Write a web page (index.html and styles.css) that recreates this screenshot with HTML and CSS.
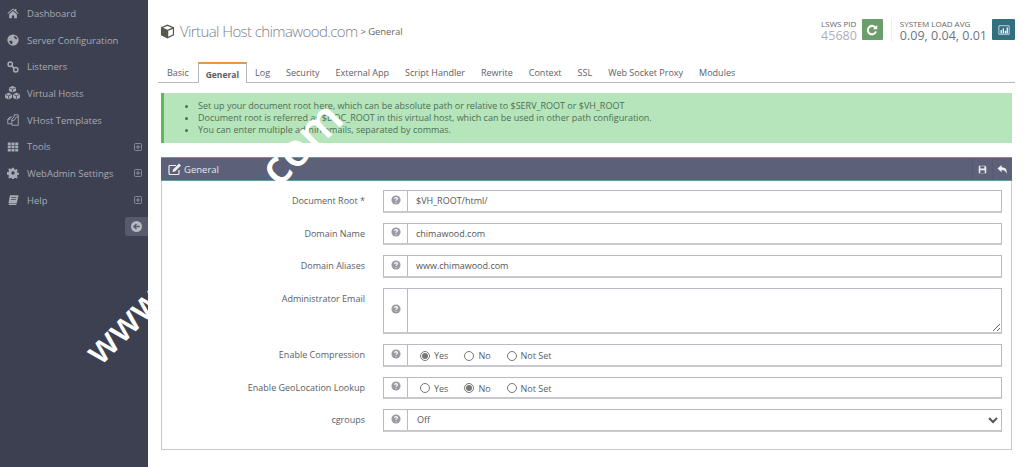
FILE: index.html
```html
<!DOCTYPE html>
<html lang="en">
<head>
<meta charset="utf-8">
<title>Virtual Host chimawood.com</title>
<link rel="stylesheet" href="styles.css">
</head>
<body>
<aside class="sidebar">
  <nav class="nav">
    <a class="nav-item"><svg class="nav-icon" viewBox="0 0 16 16"><path d="M8 2 .5 8.400l.9 1L8 3.800l6.600 5.600.9-1L12.500 5.800V2.500h-2V4.100z"/><path d="M2.800 9.800 8 5.300l5.200 4.500V15H9.500v-3.800h-3V15H2.800z"/></svg><span>Dashboard</span></a>
    <a class="nav-item"><svg class="nav-icon" viewBox="0 0 16 16"><circle cx="8" cy="8" r="7.500"/><path class="cut" d="M10 2.500c1.800.6 3.300 2.200 3.700 4l-2.200.5-1-1.600-1.500-.5zM2.800 9.500l3-.7 1.700 1.700-.7 3.200C4.800 13 3.300 11.500 2.800 9.500z"/></svg><span>Server Configuration</span></a>
    <a class="nav-item"><svg class="nav-icon" viewBox="0 0 16 16"><g class="line"><circle cx="4.300" cy="4.300" r="2.900"/><circle cx="11.700" cy="11.700" r="2.900"/><path d="m6.500 6.500 3 3"/></g></svg><span>Listeners</span></a>
    <a class="nav-item"><svg class="nav-icon wide" viewBox="0 0 18 15"><path d="M9 0l3.800 1.600v3.800L9 7 5.200 5.400V1.600zM4.800 7.200l3.700 1.600v3.800L4.800 14.400 1 12.600V8.800zM13.200 7.200 17 8.800v3.800l-3.800 1.800-3.700-1.800V8.800z"/><path class="cut-stroke" d="M5.500 2 9 3.400 12.500 2M9 3.400V7M1.400 9l3.400 1.500L8 9M4.800 10.500V14M10 9l3.200 1.500L16.600 9M13.200 10.500V14"/></svg><span>Virtual Hosts</span></a>
    <a class="nav-item"><svg class="nav-icon" viewBox="0 0 16 16"><g class="line thin"><path d="M7 4H4L1 7v6h5"/><path d="M4 4v3H1"/><path d="M6.500 9V7l3-3V1h5.500v3"/><path d="M6.500 8.500h3l3-4.500H15v11H6.500z"/></g></svg><span>VHost Templates</span></a>
    <a class="nav-item"><svg class="nav-icon" viewBox="0 0 16 16"><path d="M1 2h4v3.500H1zM6 2h4v3.500H6zM11 2h4v3.500h-4zM1 6.300h4v3.500H1zM6 6.300h4v3.500H6zM11 6.300h4v3.500h-4zM1 10.600h4v3.500H1zM6 10.600h4v3.500H6zM11 10.600h4v3.500h-4z"/></svg><span>Tools</span><svg class="expand" viewBox="0 0 9 9"><rect x=".5" y=".5" width="8" height="8" rx="1.500"/><path d="M2 4.500h5M4.500 2v5"/></svg></a>
    <a class="nav-item"><svg class="nav-icon" viewBox="0 0 16 16"><path d="M6.800 1h2.400l.3 2 1.500.7 1.700-1.100 1.700 1.700-1.100 1.700.6 1.500 2 .3v2.400l-2 .3-.6 1.500 1.100 1.700-1.700 1.700-1.700-1.100-1.500.6-.3 2H6.800l-.3-2-1.500-.6-1.700 1.100-1.700-1.700 1.100-1.700-.7-1.500-2-.3V6.800l2-.3.700-1.500-1.100-1.700 1.700-1.700L5 2.700l1.500-.7z"/><circle class="cut" cx="8" cy="8" r="2.200"/></svg><span>WebAdmin Settings</span><svg class="expand" viewBox="0 0 9 9"><rect x=".5" y=".5" width="8" height="8" rx="1.500"/><path d="M2 4.500h5M4.500 2v5"/></svg></a>
    <a class="nav-item"><svg class="nav-icon" viewBox="0 0 16 16"><path d="M4 1.500h11.500l-2.500 10.500H2z"/><path d="M2 12.800h10.800l-.4 1.700H2.500z"/><path class="cut" d="M6 4h6.500l-.2 1H5.800zM5.400 6.500h6.500l-.2 1H5.200z"/></svg><span>Help</span><svg class="expand" viewBox="0 0 9 9"><rect x=".5" y=".5" width="8" height="8" rx="1.500"/><path d="M2 4.500h5M4.500 2v5"/></svg></a>
  </nav>
  <div class="collapse"><svg viewBox="0 0 12 12"><circle cx="6" cy="6" r="6"/><path class="cut-line" d="M9.500 6H3.500M6 3.200 3.200 6 6 8.800"/></svg></div>
</aside>

<main class="main">
  <header class="top">
    <h1 class="title">
      <svg class="cube" viewBox="0 0 16 16"><path d="M8 .5 15 3.500v8.500L8 15.500 1 12V3.500z" fill="#59564b"/><path d="M8 2 12.800 4 8 6 3.200 4z" fill="#fff"/><path d="M8.800 7.300 13.700 5.200v6L8.800 13.700z" fill="#fff"/></svg>
      <span>Virtual Host chimawood.com</span><small>&gt; General</small>
    </h1>
    <div class="stats">
      <div class="stat"><div class="stat-text"><div class="stat-label">LSWS PID</div><div class="stat-value pid">45680</div></div>
        <div class="stat-btn green"><svg viewBox="0 0 12 12"><path class="btn-line" d="M9.800 4.200A4.200 4.200 0 1 0 10 7.500"/><path class="btn-fill" d="M7 5.300h4.300V1z"/></svg></div></div>
      <div class="stat sys"><div class="stat-text"><div class="stat-label">SYSTEM LOAD AVG</div><div class="stat-value">0.09, 0.04, 0.01</div></div>
        <div class="stat-btn teal"><svg viewBox="0 0 14 12"><path class="btn-frame" d="M1 1h12v10H1z"/><path class="btn-bars" d="M3 6h1.500v4H3zM5.500 4h1.500v6H5.500zM8 7h1.500v3H8zM10 3h1.500v7H10z"/></svg></div></div>
    </div>
  </header>

  <div class="tabs">
    <a class="tab">Basic</a><a class="tab active">General</a><a class="tab">Log</a><a class="tab">Security</a><a class="tab">External App</a><a class="tab">Script Handler</a><a class="tab">Rewrite</a><a class="tab">Context</a><a class="tab">SSL</a><a class="tab">Web Socket Proxy</a><a class="tab">Modules</a>
  </div>

  <div class="alert">
    <ul>
      <li>Set up your document root here, which can be absolute path or relative to $SERV_ROOT or $VH_ROOT</li>
      <li>Document root is referred as $DOC_ROOT in this virtual host, which can be used in other path configuration.</li>
      <li>You can enter multiple admin emails, separated by commas.</li>
    </ul>
  </div>

  <section class="panel">
    <div class="panel-head">
      <svg class="edit" viewBox="0 0 14 14"><path class="edit-box" d="M11 8v3.500a1 1 0 0 1-1 1H2a1 1 0 0 1-1-1v-7a1 1 0 0 1 1-1h6"/><path class="edit-pen" d="M5 7.500 11 1.500l2 2-6 6-2.500.5z"/></svg>
      <span class="panel-title">General</span>
      <div class="panel-actions">
        <span class="action"><svg viewBox="0 0 12 12"><path class="act" d="M1 1h8.500L11 2.500V11H1z"/><path class="act-cut" d="M3 1.500h5.500v3H3zM3 7h6v3.500H3z"/></svg></span>
        <span class="action"><svg class="back" viewBox="0 0 12 12"><path class="act" d="M5 1 .5 5 5 9V6.500c3 0 4.500 1 5.500 4 .8-4-1-7-5.500-7z"/></svg></span>
      </div>
    </div>
    <form class="form">
      <div class="row"><label class="label">Document Root *</label><div class="field"><span class="hint"><svg viewBox="0 0 12 12"><circle cx="6" cy="6" r="5.500"/><path class="q" d="M4.500 4.700c0-2 3.200-2 3.200-.1 0 1.200-1.700 1.300-1.700 2.400"/><circle class="qd" cx="6" cy="8.700" r=".7"/></svg></span><input class="control" type="text" value="$VH_ROOT/html/"></div></div>
      <div class="row"><label class="label">Domain Name</label><div class="field"><span class="hint"><svg viewBox="0 0 12 12"><circle cx="6" cy="6" r="5.500"/><path class="q" d="M4.500 4.700c0-2 3.200-2 3.200-.1 0 1.200-1.700 1.300-1.700 2.400"/><circle class="qd" cx="6" cy="8.700" r=".7"/></svg></span><input class="control" type="text" value="chimawood.com"></div></div>
      <div class="row"><label class="label">Domain Aliases</label><div class="field"><span class="hint"><svg viewBox="0 0 12 12"><circle cx="6" cy="6" r="5.500"/><path class="q" d="M4.500 4.700c0-2 3.200-2 3.200-.1 0 1.200-1.700 1.300-1.700 2.400"/><circle class="qd" cx="6" cy="8.700" r=".7"/></svg></span><input class="control" type="text" value="www.chimawood.com"></div></div>
      <div class="row tall"><label class="label">Administrator Email</label><div class="field"><span class="hint"><svg viewBox="0 0 12 12"><circle cx="6" cy="6" r="5.500"/><path class="q" d="M4.500 4.700c0-2 3.200-2 3.200-.1 0 1.200-1.700 1.300-1.700 2.400"/><circle class="qd" cx="6" cy="8.700" r=".7"/></svg></span><textarea class="control area"></textarea></div></div>
      <div class="row"><label class="label">Enable Compression</label><div class="field"><span class="hint"><svg viewBox="0 0 12 12"><circle cx="6" cy="6" r="5.500"/><path class="q" d="M4.500 4.700c0-2 3.200-2 3.200-.1 0 1.200-1.700 1.300-1.700 2.400"/><circle class="qd" cx="6" cy="8.700" r=".7"/></svg></span><div class="radios"><label class="radio"><input type="radio" name="c" checked>Yes</label><label class="radio"><input type="radio" name="c">No</label><label class="radio"><input type="radio" name="c">Not Set</label></div></div></div>
      <div class="row"><label class="label">Enable GeoLocation Lookup</label><div class="field"><span class="hint"><svg viewBox="0 0 12 12"><circle cx="6" cy="6" r="5.500"/><path class="q" d="M4.500 4.700c0-2 3.200-2 3.200-.1 0 1.200-1.700 1.300-1.700 2.400"/><circle class="qd" cx="6" cy="8.700" r=".7"/></svg></span><div class="radios"><label class="radio"><input type="radio" name="g">Yes</label><label class="radio"><input type="radio" name="g" checked>No</label><label class="radio"><input type="radio" name="g">Not Set</label></div></div></div>
      <div class="row"><label class="label">cgroups</label><div class="field"><span class="hint"><svg viewBox="0 0 12 12"><circle cx="6" cy="6" r="5.500"/><path class="q" d="M4.500 4.700c0-2 3.200-2 3.200-.1 0 1.200-1.700 1.300-1.700 2.400"/><circle class="qd" cx="6" cy="8.700" r=".7"/></svg></span><select class="control"><option>Off</option></select></div></div>
    </form>
  </section>
</main>

<div class="watermark"><span class="wm-start">www</span><span class="wm-end">com</span></div>
</body>
</html>
```
FILE: styles.css
```css
* { box-sizing: border-box; }
html, body { height: 100%; }
body {
  margin: 0;
  display: flex;
  overflow: hidden;
  background: #fff;
  color: #555;
  font-family: "Open Sans", "Noto Sans", sans-serif;
  font-size: 9px;
}

/* Sidebar */
.sidebar { flex: 0 0 148px; background: #3d4051; display: flex; flex-direction: column; }
.nav { display: flex; flex-direction: column; }
.nav-item { display: flex; align-items: center; height: 26.700px; padding: 0 6px 0 7px; color: #a7aab3; font-size: 9.500px; }
.nav-icon { width: 12px; height: 12px; margin-right: 8px; fill: #a7aab3; flex: none; }
.nav-icon.wide { width: 17px; height: 14px; margin-left: -3px; margin-right: 6px; }
.nav-icon .cut { fill: #3d4051; }
.nav-icon .cut-stroke { fill: none; stroke: #3d4051; stroke-width: .8; }
.nav-icon .line { fill: none; stroke: #a7aab3; stroke-width: 2; }
.nav-icon .line.thin { stroke-width: 1.200; }
.expand { width: 8px; height: 8px; margin-left: auto; fill: none; stroke: #9295a0; stroke-width: 1; }
.collapse { align-self: flex-end; width: 23px; height: 19px; margin-top: 3px; background: #565a6c; display: flex; align-items: center; justify-content: center; border-radius: 2px 0 0 2px; }
.collapse svg { width: 11px; height: 11px; fill: #b5b8c0; }
.cut-line { fill: none; stroke: #565a6c; stroke-width: 1.600; }

/* Main */
.main { flex: 1; min-width: 0; padding: 0 12px 0 13px; }
.top { display: flex; justify-content: space-between; height: 62px; padding-top: 19px; }
.title { margin: 0 0 0 -1px; display: flex; align-items: center; height: 24px; font-weight: 300; font-size: 15px; color: #7c7f88; letter-spacing: -.6px; }
.cube { width: 15px; height: 15px; margin-right: 5px; }
.title small { font-size: 9.500px; font-weight: 400; color: #666; margin-left: 3px; letter-spacing: -.1px; }
.stats { display: flex; margin-right: -3px; }
.stat { display: flex; align-items: flex-start; }
.stat.sys { margin-left: 8px; padding-left: 8px; border-left: 1px solid #eee; height: 23px; }
.stat-text { margin-right: 5px; }
.stat-label { font-size: 8px; line-height: 9px; color: #666; }
.stat-value { font-size: 12.500px; line-height: 15px; color: #6f7484; }
.stat-value.pid { color: #aeb0b8; }
.stat-btn { width: 21px; height: 21px; border-radius: 1px; display: flex; align-items: center; justify-content: center; }
.stat-btn.green { background: #6c9d6c; }
.stat-btn.teal { background: #30707f; width: 23px; }
.stat-btn svg { width: 12px; height: 12px; }
.btn-line { fill: none; stroke: #fff; stroke-width: 2; }
.btn-fill { fill: #fff; }
.btn-frame { fill: none; stroke: #dde; stroke-width: 1; }
.btn-bars { fill: #fff; }

/* Tabs */
.tabs { display: flex; height: 21px; margin: 0 -3px; border-bottom: 1px solid #b4b6bc; padding-left: 1px; }
.tab { padding: 5px 8px 0; font-size: 9px; color: #5d6068; height: 20px; line-height: 12px; }
.tab.active { height: 21px; padding: 4px 7px 0; margin-left: 1px; font-size: 8.500px; font-weight: 700; background: #fff; border: 1px solid #b4b6bc; border-top: 2px solid #e8963f; border-bottom: 0; color: #5a5d65; line-height: 14px; }

/* Alert */
.alert { height: 50px; margin-top: 10px; padding: 7px 0 0 18px; background: #b6e4bb; border-left: 3px solid #5cb85c; font-size: 9px; line-height: 12.200px; color: #4e6f55; }
.alert ul { margin: 0; padding: 0 0 0 16px; }

/* Panel */
.panel { margin-top: 14px; height: 293px; border: 1px solid #c8c9cf; border-top: 0; }
.panel-head { display: flex; align-items: center; height: 24px; margin: 0 -1px; padding-left: 7px; background: #5c6079; border-top: 1px solid #6a9a98; border-bottom: 1px solid #6a9a98; color: #e7e8ec; }
.edit { width: 14px; height: 14px; margin-right: 2px; }
.edit-box { fill: none; stroke: #eee; stroke-width: 1.200; }
.edit-pen { fill: #eee; }
.panel-title { font-size: 9.500px; }
.panel-actions { margin-left: auto; display: flex; height: 100%; }
.action { width: 20px; display: flex; align-items: center; justify-content: center; border-left: 1px solid #565a72; }
.action svg { width: 9px; height: 9px; }
.action svg.back { width: 11px; height: 11px; }
.act { fill: #eee; }
.act-cut { fill: #5c6079; }

/* Form */
.form { padding: 9px 9px 0 0; display: flex; flex-direction: column; gap: 10px; }
.row { display: flex; align-items: flex-start; }
.label { flex: 0 0 203px; text-align: right; color: #5a5c64; font-size: 9px; line-height: 22px; }
.field { display: flex; flex: 1; height: 22.500px; margin-left: 18px; border: 1px solid #b9bac2; border-bottom-width: 2px; border-bottom-color: #c8c9cf; background: #fff; }
.row.tall .field { height: 46.500px; }
.hint { flex: 0 0 24px; border-right: 1px solid #b9bac2; display: flex; align-items: center; justify-content: center; padding-bottom: 2px; }
.hint svg { width: 10px; height: 10px; fill: #9a9ba3; }
.q { fill: none; stroke: #fff; stroke-width: 1.400; }
.qd { fill: #fff; }
.control { flex: 1; min-width: 0; border: 0; outline: 0; background: #fff; padding: 0 8px; font: 9px "Open Sans", "Noto Sans", sans-serif; color: #555; }
.area { height: 100%; }
select.control { padding-left: 5px; }
.radios { display: flex; align-items: center; padding: 2px 0 0 12px; }
.radio { display: flex; align-items: center; margin-right: 16px; font-size: 9px; color: #5a5c64; }
.radio input { width: 10px; height: 10px; margin: 0 4px 0 0; accent-color: #777; }

/* Watermark lying over the page */
.watermark {
  position: absolute;
  left: 37px;
  top: 209px;
  width: 347px;
  height: 44px;
  display: flex;
  align-items: baseline;
  justify-content: space-between;
  transform: rotate(-45deg);
  color: #fff;
  font-weight: 600;
  line-height: 44px;
  pointer-events: none;
}
.wm-start { font-size: 37px; }
.wm-end { font-size: 46px; }
```
